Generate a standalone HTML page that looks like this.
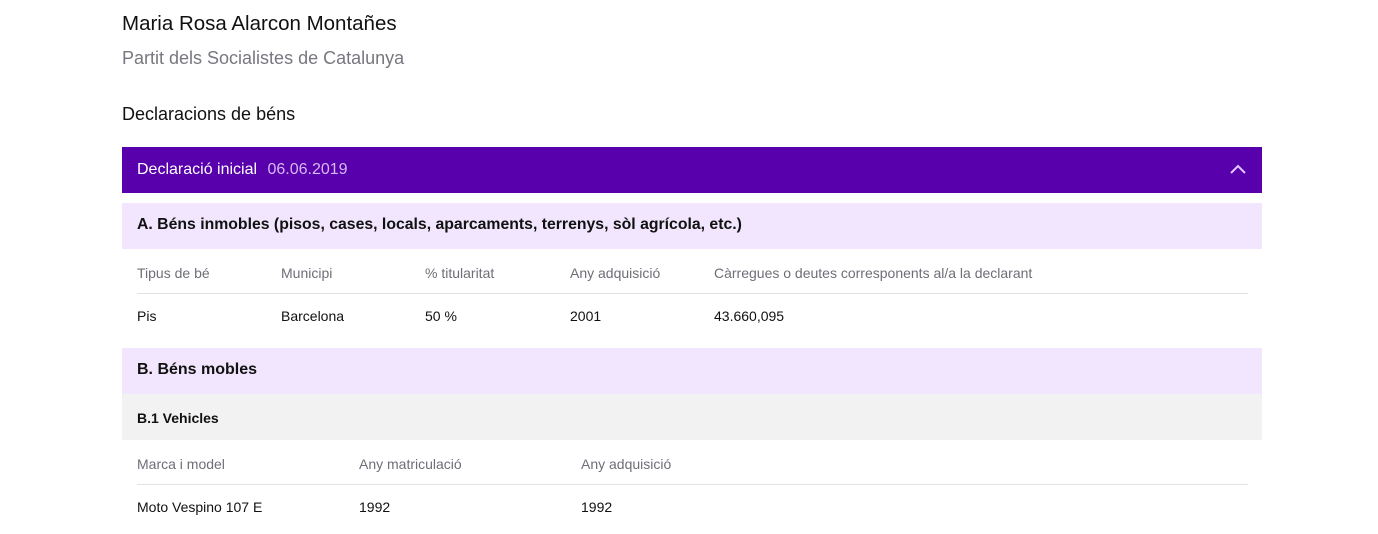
<!DOCTYPE html>
<html><head><meta charset="utf-8"><style>
body{margin:0;width:1378px;height:534px;background:#fff;font-family:"Liberation Sans",sans-serif;position:relative;overflow:hidden;color:#1a1a1a}
.a{position:absolute;white-space:nowrap}
.bar{position:absolute;left:122px;width:1140px}
.h{color:#6e6e78;font-size:14px}
.v{color:#111;font-size:14px}
.line{position:absolute;left:137px;width:1111px;height:1px;background:#e2e2e2}
</style></head><body>
<div class="a" style="left:122px;top:12px;font-size:20.5px;color:#111">Maria Rosa Alarcon Montañes</div>
<div class="a" style="left:122px;top:48px;font-size:18px;color:#77777f">Partit dels Socialistes de Catalunya</div>
<div class="a" style="left:122px;top:104px;font-size:18px;color:#111">Declaracions de béns</div>

<div class="bar" style="top:147px;height:46px;background:#5800ab"></div>
<div class="a" style="left:137px;top:161px;font-size:16px;color:#fff">Declaració inicial <span style="color:#d6b8f3;margin-left:6px">06.06.2019</span></div>
<svg class="a" style="left:1229px;top:163px" width="18" height="12" viewBox="0 0 18 12"><path d="M2 10 L9 3 L16 10" fill="none" stroke="#e4c8ff" stroke-width="2"/></svg>

<div class="bar" style="top:203px;height:46px;background:#f1e6fd"></div>
<div class="a" style="left:137px;top:216px;font-size:15.8px;font-weight:bold;color:#111">A. Béns inmobles (pisos, cases, locals, aparcaments, terrenys, sòl agrícola, etc.)</div>
<div class="a h" style="left:137px;top:265px">Tipus de bé</div>
<div class="a h" style="left:281px;top:265px">Municipi</div>
<div class="a h" style="left:425px;top:265px">% titularitat</div>
<div class="a h" style="left:570px;top:265px">Any adquisició</div>
<div class="a h" style="left:714px;top:265px">Càrregues o deutes corresponents al/a la declarant</div>
<div class="line" style="top:293px"></div>
<div class="a v" style="left:137px;top:308px">Pis</div>
<div class="a v" style="left:281px;top:308px">Barcelona</div>
<div class="a v" style="left:425px;top:308px">50 %</div>
<div class="a v" style="left:570px;top:308px">2001</div>
<div class="a v" style="left:714px;top:308px">43.660,095</div>

<div class="bar" style="top:348px;height:46px;background:#f1e6fd"></div>
<div class="a" style="left:137px;top:361px;font-size:16px;font-weight:bold;color:#111">B. Béns mobles</div>
<div class="bar" style="top:394px;height:46px;background:#f2f2f2"></div>
<div class="a" style="left:137px;top:410px;font-size:14px;font-weight:bold;color:#111">B.1 Vehicles</div>
<div class="a h" style="left:137px;top:456px">Marca i model</div>
<div class="a h" style="left:359px;top:456px">Any matriculació</div>
<div class="a h" style="left:581px;top:456px">Any adquisició</div>
<div class="line" style="top:484px"></div>
<div class="a v" style="left:137px;top:499px">Moto Vespino 107 E</div>
<div class="a v" style="left:359px;top:499px">1992</div>
<div class="a v" style="left:581px;top:499px">1992</div>
</body></html>
